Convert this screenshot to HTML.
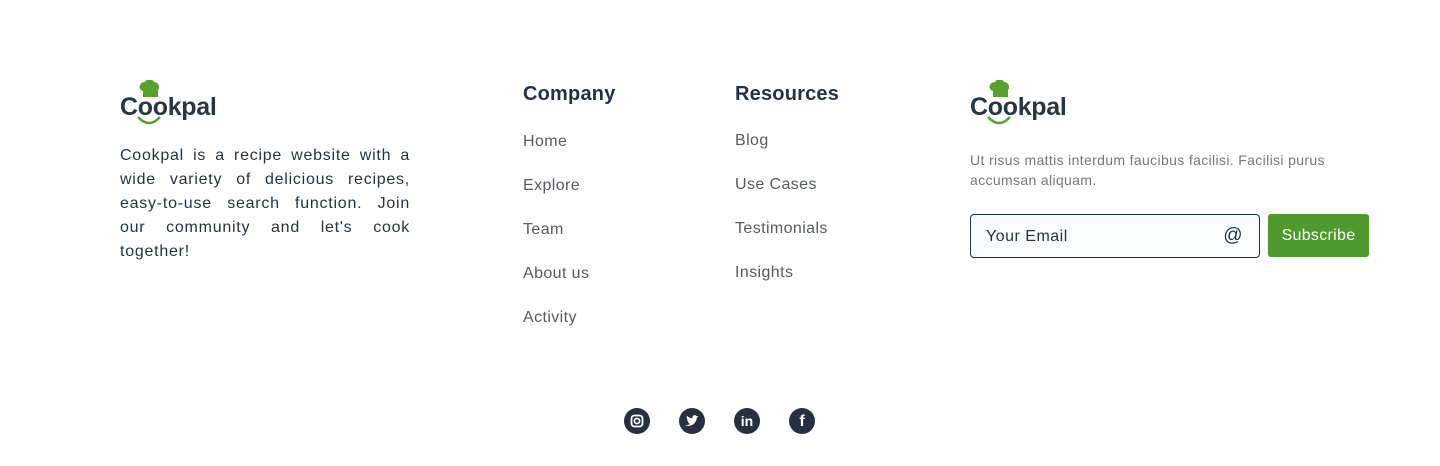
<!DOCTYPE html>
<html><head><style>
*{margin:0;padding:0;box-sizing:border-box}
body{width:1440px;height:466px;background:#fff;font-family:"Liberation Sans",sans-serif;position:relative;overflow:hidden;color:#1f3347}
.abs{position:absolute}
.logo{position:absolute;width:110px;height:50px}
.logo .t{position:absolute;left:0;top:13px;font-size:25px;font-weight:bold;color:#253646;letter-spacing:-0.3px}
.desc{left:120px;top:144px;width:290px;font-size:16px;line-height:24px;text-align:justify;color:#1f3347;letter-spacing:0.75px}
h3{position:absolute;font-size:20px;font-weight:bold;color:#1f3347;letter-spacing:0.2px}
.links a{position:absolute;font-size:16px;color:#555b62;text-decoration:none;letter-spacing:0.4px}
.rt{left:970px;top:150px;width:400px;font-size:14px;line-height:20px;color:#777;letter-spacing:0.35px}
.inp{left:970px;top:214px;width:290px;height:44px;border:1px solid #1f3347;border-radius:4px;background:#f9fbfd;font-size:16px;padding:13px 15px;color:#1f3347;letter-spacing:0.5px}
.btn{left:1268px;top:214px;width:101px;height:43px;background:#4f9a2d;border-radius:3px;color:#fff;font-size:16px;text-align:center;line-height:44px;letter-spacing:0.3px}
.ic{position:absolute;top:408px;width:26px;height:26px;border-radius:50%;background:#263042;color:#fff;text-align:center;font-weight:bold}
</style></head><body>
<div class="logo" style="left:120px;top:80px">
<svg class="abs" style="left:15px;top:0" width="28" height="20"><path d="M5 9a5 5 0 0 1 5-7a5 5 0 0 1 9 0a5 5 0 0 1 4 8v7H8v-6a5 5 0 0 1-3-2z" fill="#5aa02c"/></svg>
<div class="t">Cookpal</div>
<svg class="abs" style="left:15px;top:35px" width="28" height="12"><path d="M3 2q11 12 22 0" stroke="#5aa02c" stroke-width="2.5" fill="none"/></svg>
</div>
<div class="abs desc">Cookpal is a recipe website with a wide variety of delicious recipes, easy-to-use search function. Join our community and let's cook together!</div>
<h3 style="left:523px;top:83px">Company</h3>
<div class="links">
<a style="left:523px;top:133px">Home</a><a style="left:523px;top:177px">Explore</a><a style="left:523px;top:221px">Team</a><a style="left:523px;top:265px">About us</a><a style="left:523px;top:309px">Activity</a>
</div>
<h3 style="left:735px;top:83px">Resources</h3>
<div class="links">
<a style="left:735px;top:132px">Blog</a><a style="left:735px;top:176px">Use Cases</a><a style="left:735px;top:220px">Testimonials</a><a style="left:735px;top:264px">Insights</a>
</div>
<div class="logo" style="left:970px;top:80px">
<svg class="abs" style="left:15px;top:0" width="28" height="20"><path d="M5 9a5 5 0 0 1 5-7a5 5 0 0 1 9 0a5 5 0 0 1 4 8v7H8v-6a5 5 0 0 1-3-2z" fill="#5aa02c"/></svg>
<div class="t">Cookpal</div>
<svg class="abs" style="left:15px;top:35px" width="28" height="12"><path d="M3 2q11 12 22 0" stroke="#5aa02c" stroke-width="2.5" fill="none"/></svg>
</div>
<div class="abs rt">Ut risus mattis interdum faucibus facilisi. Facilisi purus accumsan aliquam.</div>
<div class="abs inp">Your Email<span style="position:absolute;right:16px;top:10px;font-size:19px">@</span></div>
<div class="abs btn">Subscribe</div>
<div class="ic" style="left:624px"><svg width="26" height="26"><rect x="7.5" y="7.5" width="11" height="11" rx="3" stroke="#fff" stroke-width="1.8" fill="none"/><circle cx="13" cy="13" r="2.6" stroke="#fff" stroke-width="1.6" fill="none"/></svg></div>
<div class="ic" style="left:679px"><svg width="26" height="26"><path d="M6 17q4 2 8-0.5q3-2 4-7l1.5-1.5l-1.8 0.3q-1-1.5-2.7-1q-2 0.8-1.5 3q-3 0-5.5-2.5q-1 2.5 1 4l-1-0.2q0.5 2 2 2.5l-1 0.1q0.8 1.5 2.3 1.7q-2 1.3-4.3 1.1z" fill="#fff"/></svg></div>
<div class="ic" style="left:734px;font-size:14px;line-height:26px">in</div>
<div class="ic" style="left:789px;font-size:16px;line-height:28px">f</div>
</body></html>
